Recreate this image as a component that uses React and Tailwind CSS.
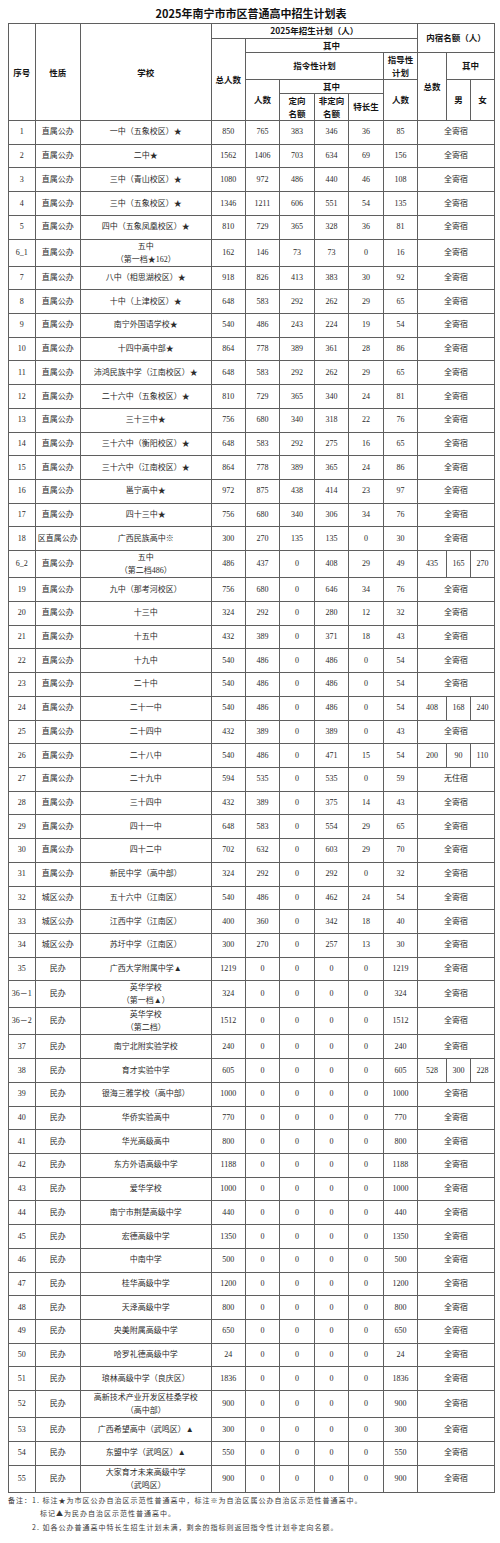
import React from "react";

const rows = [
  ["1", "直属公办", "一中（五象校区）★", "850", "765", "383", "346", "36", "85", "全寄宿"],
  ["2", "直属公办", "二中★", "1562", "1406", "703", "634", "69", "156", "全寄宿"],
  ["3", "直属公办", "三中（青山校区）★", "1080", "972", "486", "440", "46", "108", "全寄宿"],
  ["4", "直属公办", "三中（五象校区）★", "1346", "1211", "606", "551", "54", "135", "全寄宿"],
  ["5", "直属公办", "四中（五象凤凰校区）★", "810", "729", "365", "328", "36", "81", "全寄宿"],
  ["6_1", "直属公办", "五中\n（第一档★162）", "162", "146", "73", "73", "0", "16", "全寄宿"],
  ["7", "直属公办", "八中（相思湖校区）★", "918", "826", "413", "383", "30", "92", "全寄宿"],
  ["8", "直属公办", "十中（上津校区）★", "648", "583", "292", "262", "29", "65", "全寄宿"],
  ["9", "直属公办", "南宁外国语学校★", "540", "486", "243", "224", "19", "54", "全寄宿"],
  ["10", "直属公办", "十四中高中部★", "864", "778", "389", "361", "28", "86", "全寄宿"],
  ["11", "直属公办", "沛鸿民族中学（江南校区）★", "648", "583", "292", "262", "29", "65", "全寄宿"],
  ["12", "直属公办", "二十六中（五象校区）★", "810", "729", "365", "340", "24", "81", "全寄宿"],
  ["13", "直属公办", "三十三中★", "756", "680", "340", "318", "22", "76", "全寄宿"],
  ["14", "直属公办", "三十六中（衡阳校区）★", "648", "583", "292", "275", "16", "65", "全寄宿"],
  ["15", "直属公办", "三十六中（江南校区）★", "864", "778", "389", "365", "24", "86", "全寄宿"],
  ["16", "直属公办", "邕宁高中★", "972", "875", "438", "414", "23", "97", "全寄宿"],
  ["17", "直属公办", "四十三中★", "756", "680", "340", "306", "34", "76", "全寄宿"],
  ["18", "区直属公办", "广西民族高中※", "300", "270", "135", "135", "0", "30", "全寄宿"],
  ["6_2", "直属公办", "五中\n（第二档486）", "486", "437", "0", "408", "29", "49", ["435", "165", "270"]],
  ["19", "直属公办", "九中（那考河校区）", "756", "680", "0", "646", "34", "76", "全寄宿"],
  ["20", "直属公办", "十三中", "324", "292", "0", "280", "12", "32", "全寄宿"],
  ["21", "直属公办", "十五中", "432", "389", "0", "371", "18", "43", "全寄宿"],
  ["22", "直属公办", "十九中", "540", "486", "0", "486", "0", "54", "全寄宿"],
  ["23", "直属公办", "二十中", "540", "486", "0", "486", "0", "54", "全寄宿"],
  ["24", "直属公办", "二十一中", "540", "486", "0", "486", "0", "54", ["408", "168", "240"]],
  ["25", "直属公办", "二十四中", "432", "389", "0", "389", "0", "43", "全寄宿"],
  ["26", "直属公办", "二十八中", "540", "486", "0", "471", "15", "54", ["200", "90", "110"]],
  ["27", "直属公办", "二十九中", "594", "535", "0", "535", "0", "59", "无住宿"],
  ["28", "直属公办", "三十四中", "432", "389", "0", "375", "14", "43", "全寄宿"],
  ["29", "直属公办", "四十一中", "648", "583", "0", "554", "29", "65", "全寄宿"],
  ["30", "直属公办", "四十二中", "702", "632", "0", "603", "29", "70", "全寄宿"],
  ["31", "直属公办", "新民中学（高中部）", "324", "292", "0", "292", "0", "32", "全寄宿"],
  ["32", "城区公办", "五十六中（江南区）", "540", "486", "0", "462", "24", "54", "全寄宿"],
  ["33", "城区公办", "江西中学（江南区）", "400", "360", "0", "342", "18", "40", "全寄宿"],
  ["34", "城区公办", "苏圩中学（江南区）", "300", "270", "0", "257", "13", "30", "全寄宿"],
  ["35", "民办", "广西大学附属中学▲", "1219", "0", "0", "0", "0", "1219", "全寄宿"],
  ["36－1", "民办", "英华学校\n（第一档▲）", "324", "0", "0", "0", "0", "324", "全寄宿"],
  ["36－2", "民办", "英华学校\n（第二档）", "1512", "0", "0", "0", "0", "1512", "全寄宿"],
  ["37", "民办", "南宁北附实验学校", "240", "0", "0", "0", "0", "240", "全寄宿"],
  ["38", "民办", "育才实验中学", "605", "0", "0", "0", "0", "605", ["528", "300", "228"]],
  ["39", "民办", "银海三雅学校（高中部）", "1000", "0", "0", "0", "0", "1000", "全寄宿"],
  ["40", "民办", "华侨实验高中", "770", "0", "0", "0", "0", "770", "全寄宿"],
  ["41", "民办", "华光高级高中", "800", "0", "0", "0", "0", "800", "全寄宿"],
  ["42", "民办", "东方外语高级中学", "1188", "0", "0", "0", "0", "1188", "全寄宿"],
  ["43", "民办", "爱华学校", "1000", "0", "0", "0", "0", "1000", "全寄宿"],
  ["44", "民办", "南宁市荆楚高级中学", "440", "0", "0", "0", "0", "440", "全寄宿"],
  ["45", "民办", "宏德高级中学", "1350", "0", "0", "0", "0", "1350", "全寄宿"],
  ["46", "民办", "中南中学", "500", "0", "0", "0", "0", "500", "全寄宿"],
  ["47", "民办", "桂华高级中学", "1200", "0", "0", "0", "0", "1200", "全寄宿"],
  ["48", "民办", "天泽高级中学", "800", "0", "0", "0", "0", "800", "全寄宿"],
  ["49", "民办", "央美附属高级中学", "650", "0", "0", "0", "0", "650", "全寄宿"],
  ["50", "民办", "哈罗礼德高级中学", "24", "0", "0", "0", "0", "24", "全寄宿"],
  ["51", "民办", "琅林高级中学（良庆区）", "1836", "0", "0", "0", "0", "1836", "全寄宿"],
  ["52", "民办", "高新技术产业开发区桂桑学校\n（高中部）", "900", "0", "0", "0", "0", "900", "全寄宿"],
  ["53", "民办", "广西希望高中（武鸣区）▲", "300", "0", "0", "0", "0", "300", "全寄宿"],
  ["54", "民办", "东盟中学（武鸣区）▲", "550", "0", "0", "0", "0", "550", "全寄宿"],
  ["55", "民办", "大家育才未来高级中学\n（武鸣区）", "900", "0", "0", "0", "0", "900", "全寄宿"],
];

const td = "border border-[#5f5f5f] p-0 text-center align-middle whitespace-nowrap";
const th = "border border-[#5f5f5f] p-0 text-center align-middle whitespace-nowrap font-bold";

function School({ text }) {
  const parts = text.split("\n");
  if (parts.length === 1) return <>{text}</>;
  return (
    <div className="flex flex-col items-center leading-[13px]">
      {parts.map((p, i) => (
        <span key={i}>{p}</span>
      ))}
    </div>
  );
}

export default function App() {
  return (
    <div className="w-[500px] bg-white text-[#1c1c1c] pb-[10px]">
      <div className="w-[486px] ml-[8px] h-[23px] flex items-center justify-center pt-[3px] text-[11px] font-bold font-['Noto_Sans_CJK_SC',sans-serif] text-[#111]">
        2025年南宁市市区普通高中招生计划表
      </div>
      <table className="table-fixed border-collapse w-[486px] ml-[8px]">
        <colgroup>
          <col className="w-[26.7px]" />
          <col className="w-[45.3px]" />
          <col className="w-[130.7px]" />
          <col className="w-[34.3px]" />
          <col className="w-[34px]" />
          <col className="w-[35px]" />
          <col className="w-[34px]" />
          <col className="w-[35px]" />
          <col className="w-[34px]" />
          <col className="w-[29px]" />
          <col className="w-[24px]" />
          <col className="w-[24px]" />
        </colgroup>
        <thead className="text-[8.5px] font-['Noto_Sans_CJK_SC',sans-serif] text-[#151515]">
          <tr className="h-[14.7px]">
            <th rowSpan={5} className={th}>序号</th>
            <th rowSpan={5} className={th}>性质</th>
            <th rowSpan={5} className={th}>学校</th>
            <th colSpan={6} className={th}>2025年招生计划（人）</th>
            <th colSpan={3} rowSpan={2} className={th}>内宿名额（人）</th>
          </tr>
          <tr className="h-[14px]">
            <th rowSpan={4} className={th}>总人数</th>
            <th colSpan={5} className={th}>其中</th>
          </tr>
          <tr className="h-[27px]">
            <th colSpan={4} className={th}>指令性计划</th>
            <th className={th}>
              <div className="flex flex-col items-center leading-[13px]">
                <span>指导性</span>
                <span>计划</span>
              </div>
            </th>
            <th rowSpan={3} className={th}>总数</th>
            <th colSpan={2} className={th}>其中</th>
          </tr>
          <tr className="h-[14px]">
            <th rowSpan={2} className={th}>人数</th>
            <th colSpan={3} className={th}>其中</th>
            <th rowSpan={2} className={th}>人数</th>
            <th rowSpan={2} className={th}>男</th>
            <th rowSpan={2} className={th}>女</th>
          </tr>
          <tr className="h-[27.3px]">
            <th className={th}>
              <div className="flex flex-col items-center leading-[13px]">
                <span>定向</span>
                <span>名额</span>
              </div>
            </th>
            <th className={th}>
              <div className="flex flex-col items-center leading-[13px]">
                <span>非定向</span>
                <span>名额</span>
              </div>
            </th>
            <th className={th}>特长生</th>
          </tr>
        </thead>
        <tbody className="text-[8px] font-['Liberation_Serif','Noto_Sans_CJK_SC',serif] text-[#2a2a2a]">
          {rows.map((r) => {
            const tall = r[2].includes("\n");
            return (
              <tr key={r[0]} className={tall ? "h-[27px]" : "h-[23.73px]"}>
                <td className={td}>{r[0]}</td>
                <td className={td}>{r[1]}</td>
                <td className={td}>
                  <School text={r[2]} />
                </td>
                <td className={td}>{r[3]}</td>
                <td className={td}>{r[4]}</td>
                <td className={td}>{r[5]}</td>
                <td className={td}>{r[6]}</td>
                <td className={td}>{r[7]}</td>
                <td className={td}>{r[8]}</td>
                {Array.isArray(r[9]) ? (
                  r[9].map((v, i) => (
                    <td key={i} className={td}>{v}</td>
                  ))
                ) : (
                  <td colSpan={3} className={td}>{r[9]}</td>
                )}
              </tr>
            );
          })}
        </tbody>
      </table>
      <div className="pt-[1px] text-[7px] leading-[13.5px] tracking-[1px] text-[#3a3a3a] font-['Noto_Sans_CJK_SC',sans-serif] whitespace-nowrap">
        <div className="pl-[8px]">备注：1. 标注★为市区公办自治区示范性普通高中，标注※为自治区属公办自治区示范性普通高中。</div>
        <div className="pl-[40px]">标记▲为民办自治区示范性普通高中。</div>
        <div className="pl-[32px]">2. 如各公办普通高中特长生招生计划未满，剩余的指标则返回指令性计划非定向名额。</div>
      </div>
    </div>
  );
}
